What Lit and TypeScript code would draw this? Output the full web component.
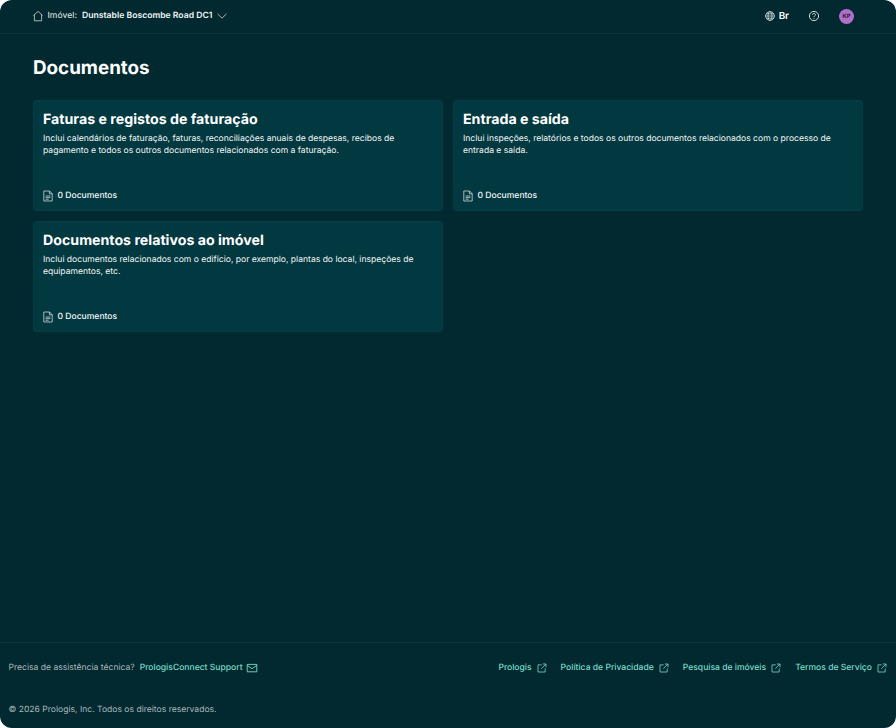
import { LitElement, html, css } from "lit";
import { customElement } from "lit/decorators.js";

const ext = html`<svg class="ext" viewBox="0 0 12 12" fill="none" stroke="currentColor" stroke-width=".95"><path d="M5.6 2.2H1.2v8.6h8.6V6.4M7 1.2h3.8V5M10.8 1.2 5.2 6.8"/></svg>`;
const doc = html`<svg class="ic doc" viewBox="0 0 12 12" fill="none" stroke="currentColor" stroke-width=".8"><path d="M1.8 1h5.7l2.7 2.7V11H1.8zM7.4 1v2.8h2.8M3.6 6h4.8M3.6 7.6h4.8M3.6 9.2h3"/></svg>`;

const cards = [
  ["Faturas e registos de faturação", "Inclui calendários de faturação, faturas, reconciliações anuais de despesas, recibos de pagamento e todos os outros documentos relacionados com a faturação."],
  ["Entrada e saída", "Inclui inspeções, relatórios e todos os outros documentos relacionados com o processo de entrada e saída."],
  ["Documentos relativos ao imóvel", "Inclui documentos relacionados com o edifício, por exemplo, plantas do local, inspeções de equipamentos, etc."],
];
const links = ["Prologis", "Política de Privacidade", "Pesquisa de imóveis", "Termos de Serviço"];

@customElement("app-root")
export class AppRoot extends LitElement {
  static styles = css`
    :host { display: block; background: #fff; font-family: Inter, "Liberation Sans", sans-serif; text-rendering: geometricPrecision; }
    .page { height: 728px; box-sizing: border-box; background: #01292f; border-radius: 12px; color: #fff; display: flex; flex-direction: column; overflow: hidden; }
    header { height: 32px; box-sizing: content-box; flex: none; display: flex; align-items: center; padding: 0 42px 1px 33px; border-bottom: 1px solid #07383e; font-size: 8.57px; }
    .ic { width: 12px; height: 12px; flex: none; }
    .home { color: #cfd8da; margin: 0 4px 0 -1.5px; }
    .lab { color: #d3dcdd; font-weight: 500; margin-right: 5px; }
    .prop { font-weight: 600; font-size: 8.65px; color: #f0f4f4; }
    .chev { color: #cfd8da; margin-left: 4px; }
    .sp { flex: 1; }
    .globe { color: #d3dcdd; margin-right: 3px; }
    .br { font-size: 9.8px; font-weight: 600; margin-right: 19px; }
    .help { color: #d3dcdd; margin-right: 19px; }
    .av { width: 15px; height: 15px; border-radius: 50%; background: #b06fc8; color: #2a1a33; font-size: 6px; font-weight: 700; display: flex; align-items: center; justify-content: center; }
    main { flex: 1; padding: 21px 33px 0; }
    h1 { margin: 0 0 19px; font-size: 18.8px; line-height: 26px; font-weight: 700; }
    .grid { display: grid; grid-template-columns: 410px 410px; gap: 10px; }
    .card { height: 111px; box-sizing: border-box; padding: 9px 9px 8px; background: #023840; border: 1px solid #033d45; border-radius: 3px; display: flex; flex-direction: column; }
    h2 { margin: 1px 0 4px; font-size: 14.2px; line-height: 18px; font-weight: 700; }
    p { margin: 0; font-size: 8.57px; line-height: 12px; color: #f4f7f7; }
    .count { margin-top: auto; display: flex; align-items: center; gap: 4px; font-size: 8.57px; font-weight: 500; line-height: 12px; color: #f4f7f7; }
    .doc { color: #cfd8da; margin-left: -1.5px; }
    footer { flex: none; height: 86px; box-sizing: border-box; border-top: 1px solid #07383e; padding: 19px 9px 0 8.5px; font-size: 8.57px; color: #a9b8ba; }
    .top { display: flex; align-items: center; height: 12px; }
    a { color: #78dccb; font-weight: 500; display: flex; align-items: center; gap: 4px; }
    .sup { margin-left: 5px; gap: 3.5px; }
    .links { margin-left: auto; display: flex; gap: 14px; }
    .ext { width: 10px; height: 10px; flex: none; margin-left: 1px; }
    .copy { margin-top: 30px; line-height: 12px; }
  `;
  render() {
    return html`<div class="page">
      <header>
        <svg class="ic home" viewBox="0 0 12 12" fill="none" stroke="currentColor" stroke-width=".8"><path d="M1.5 5.4 6 1.4l4.5 4M2.4 4.8V10.8h7.2V4.8"/></svg>
        <span class="lab">Imóvel:</span><span class="prop">Dunstable Boscombe Road DC1</span>
        <svg class="ic chev" viewBox="0 0 12 12" fill="none" stroke="currentColor" stroke-width=".8"><path d="M1.5 3.8 6 8.2l4.5-4.4"/></svg>
        <span class="sp"></span>
        <svg class="ic globe" viewBox="0 0 12 12" fill="none" stroke="currentColor" stroke-width=".8"><circle cx="6" cy="6" r="4.4"/><ellipse cx="6" cy="6" rx="2" ry="4.4"/><path d="M1.6 6h8.8M2.2 3.8h7.6M2.2 8.2h7.6"/></svg>
        <span class="br">Br</span>
        <svg class="ic help" viewBox="0 0 12 12" fill="none" stroke="currentColor" stroke-width="1"><circle cx="6" cy="6" r="4.6"/><path d="M4.6 4.8c0-1.9 2.9-1.9 2.9-.1 0 1.1-1.5 1.1-1.5 2.4M6 8.1v.8"/></svg>
        <span class="av">KP</span>
      </header>
      <main>
        <h1>Documentos</h1>
        <div class="grid">
          ${cards.map(([t, d]) => html`<div class="card"><h2>${t}</h2><p>${d}</p><div class="count">${doc}<span>0 Documentos</span></div></div>`)}
        </div>
      </main>
      <footer>
        <div class="top">
          <span>Precisa de assistência técnica?</span>
          <a class="sup">PrologisConnect Support <svg class="ic" viewBox="0 0 12 12" fill="none" stroke="currentColor" stroke-width=".9"><path d="M1.2 2.4h9.6v7.4H1.2zM1.2 3.4 6 6.6l4.8-3.2"/></svg></a>
          <div class="links">${links.map((l) => html`<a>${l} ${ext}</a>`)}</div>
        </div>
        <div class="copy">© 2026 Prologis, Inc. Todos os direitos reservados.</div>
      </footer>
    </div>`;
  }
}
